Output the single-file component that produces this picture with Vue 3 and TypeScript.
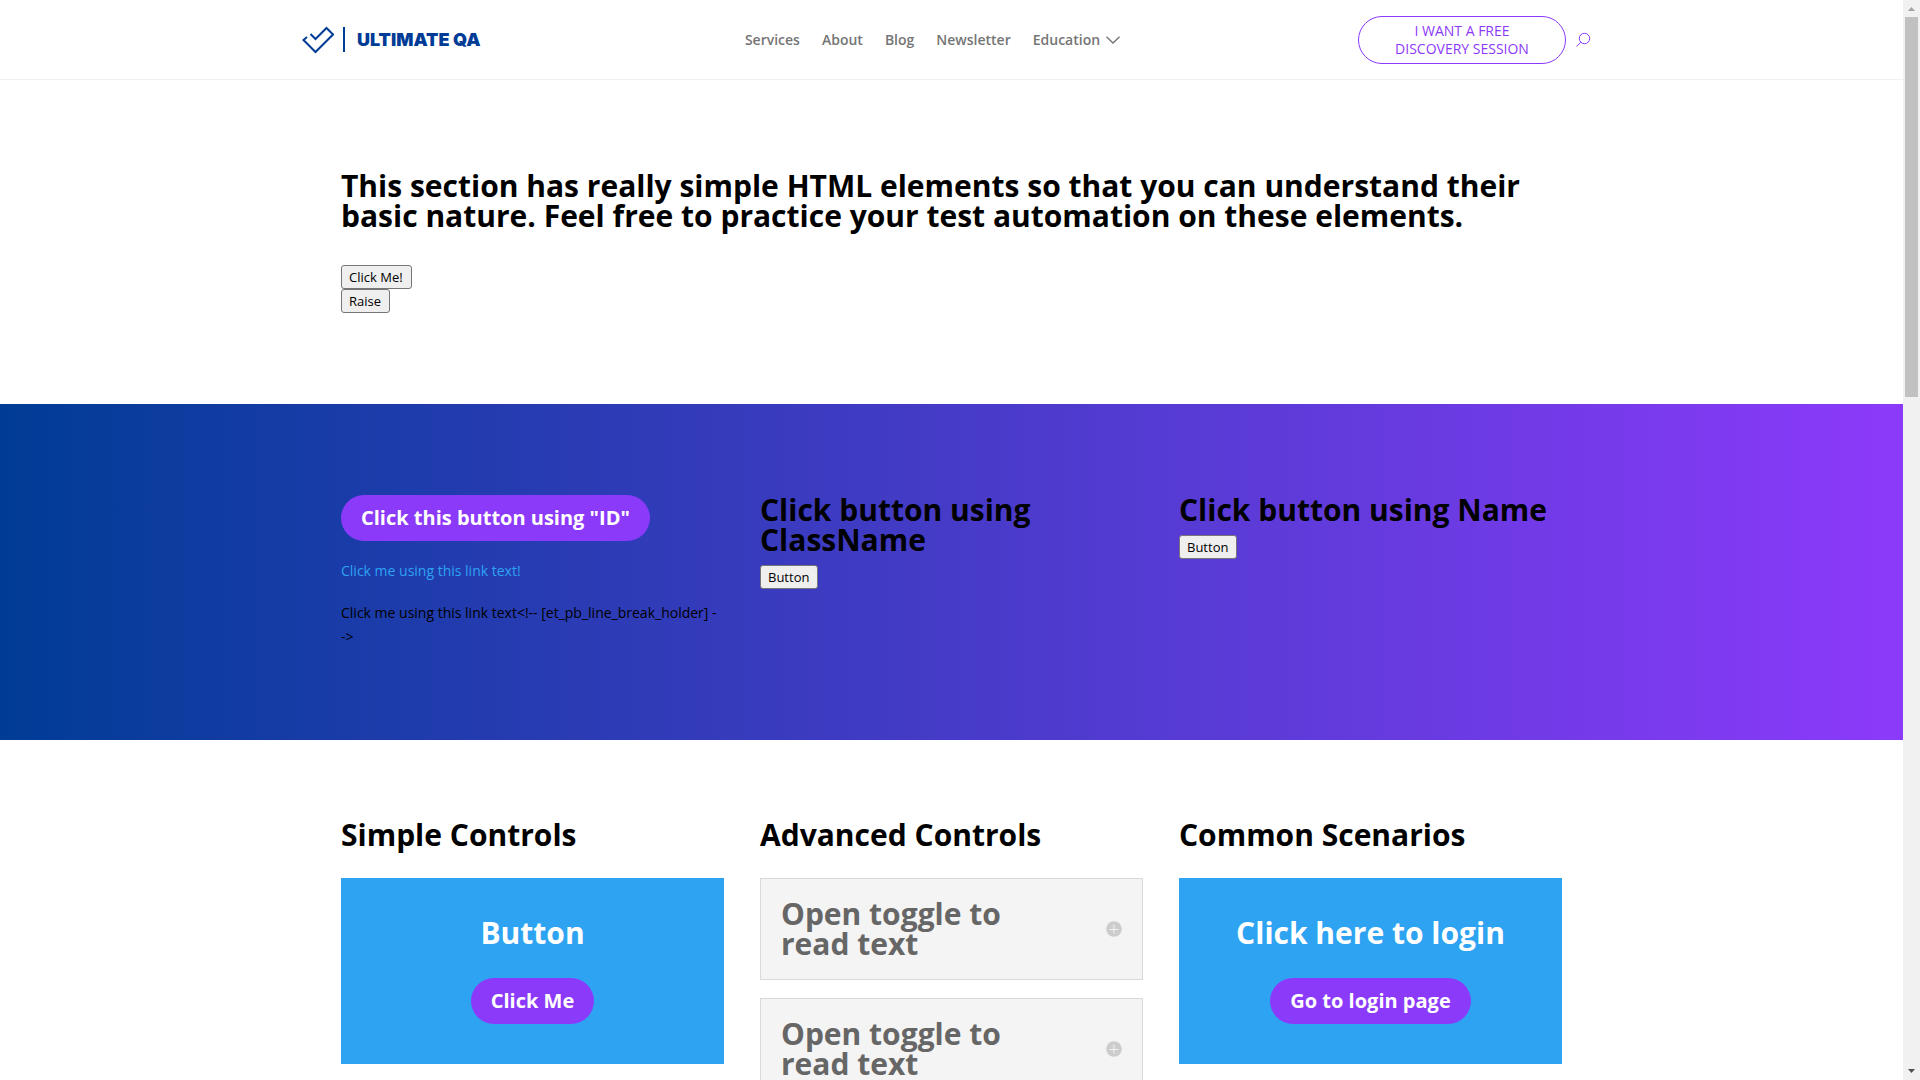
<script setup lang="ts">
interface NavItem {
  label: string
  menu?: boolean
}

const navItems: NavItem[] = [
  { label: 'Services' },
  { label: 'About' },
  { label: 'Blog' },
  { label: 'Newsletter' },
  { label: 'Education', menu: true },
]

const toggles: string[] = ['Open toggle to read text', 'Open toggle to read text']
const linkNote = 'Click me using this link text<!-- [et_pb_line_break_holder] -\n->'
</script>

<template>
  <div class="window">
    <div class="page">
      <header class="header">
        <div class="header-row">
          <a href="#" class="logo">
            <svg class="logo-mark" width="32" height="28" viewBox="0 0 32 28" aria-hidden="true">
              <path d="M8.500 8L13.500 13L24.500 2L31 8.500L13.500 26L1.500 14L5 11" />
            </svg>
            <span class="logo-bar"></span>
            <span class="logo-text">ULTIMATE QA</span>
          </a>
          <nav class="nav">
            <a v-for="item in navItems" :key="item.label" href="#" class="nav-link">
              {{ item.label }}
              <svg v-if="item.menu" width="14" height="8" viewBox="0 0 14 8" aria-hidden="true">
                <path d="M0.500 0.700L7 7L13.500 0.700" />
              </svg>
            </a>
          </nav>
          <div class="actions">
            <a href="#" class="cta">I WANT A FREE DISCOVERY SESSION</a>
            <button class="search" type="button" aria-label="Search">
              <svg width="16" height="16" viewBox="0 0 16 16" aria-hidden="true">
                <circle cx="9.500" cy="6.500" r="5.200" />
                <path d="M5.800 10.200L1.500 14.500" />
              </svg>
            </button>
          </div>
        </div>
      </header>

      <main>
        <section class="section">
          <div class="container">
            <h2 class="title intro-title">
              This section has really simple HTML elements so that you can understand their basic
              nature. Feel free to practice your test automation on these elements.
            </h2>
            <div class="stack">
              <button class="native" type="button">Click Me!</button>
              <button class="native" type="button">Raise</button>
            </div>
          </div>
        </section>

        <section class="section gradient">
          <div class="container columns">
            <div>
              <a href="#" class="pill">Click this button using "ID"</a>
              <p class="text"><a href="#" class="text-link">Click me using this link text!</a></p>
              <p class="text">{{ linkNote }}</p>
            </div>
            <div>
              <h2 class="title">Click button using ClassName</h2>
              <button class="native below-title" type="button">Button</button>
            </div>
            <div>
              <h2 class="title">Click button using Name</h2>
              <button class="native below-title" type="button">Button</button>
            </div>
          </div>
        </section>

        <section class="section controls">
          <div class="container columns">
            <div>
              <h2 class="title group-title">Simple Controls</h2>
              <div class="card">
                <h2 class="title">Button</h2>
                <a href="#" class="pill">Click Me</a>
              </div>
            </div>
            <div>
              <h2 class="title group-title">Advanced Controls</h2>
              <button v-for="(label, i) in toggles" :key="i" class="toggle" type="button">
                <span class="toggle-label">{{ label }}</span>
                <svg width="16" height="16" viewBox="0 0 16 16" aria-hidden="true">
                  <circle cx="8" cy="8" r="7.800" fill="#ccc" />
                  <path d="M3.500 8.500H12.500M8 3.500V12.500" stroke="#f4f4f4" stroke-width="1" />
                </svg>
              </button>
            </div>
            <div>
              <h2 class="title group-title">Common Scenarios</h2>
              <div class="card">
                <h2 class="title">Click here to login</h2>
                <a href="#" class="pill">Go to login page</a>
              </div>
            </div>
          </div>
        </section>
      </main>
    </div>

    <div class="scrollbar" aria-hidden="true">
      <svg width="17" height="17" viewBox="0 0 17 17"><path d="M5 11L8.500 7L12 11Z" fill="#a3a3a3" /></svg>
      <div class="thumb"></div>
      <div class="track"></div>
      <svg width="17" height="17" viewBox="0 0 17 17"><path d="M5 6L8.500 10L12 6Z" fill="#505050" /></svg>
    </div>
  </div>
</template>

<style>
body {
  margin: 0;
}
</style>

<style scoped>
.window {
  display: flex;
  height: 100vh;
  overflow: hidden;
  background: #fff;
  color: #000;
  font: 400 14px/24px "Open Sans", "Noto Sans", sans-serif;
}

.window * {
  box-sizing: border-box;
}

.window a {
  text-decoration: none;
}

.page {
  flex: 1;
  min-width: 0;
  overflow-y: auto;
  scrollbar-width: none;
}

.header {
  border-bottom: 1px solid #f0f0f0;
}

.header-row {
  display: flex;
  align-items: center;
  justify-content: space-between;
  width: 90%;
  max-width: 1299px;
  height: 79px;
  margin: 0 auto;
}

.logo {
  display: flex;
  align-items: center;
  flex: 1;
  color: #003c96;
}

.logo-mark path {
  fill: none;
  stroke: #003c96;
  stroke-width: 2;
}

.logo-bar {
  width: 2px;
  height: 25px;
  margin: 0 12px 0 9px;
  background: #003c96;
}

.logo-text {
  font: 900 18px/24px Inter, "Open Sans", sans-serif;
  white-space: nowrap;
}

.nav {
  display: flex;
  gap: 22px;
  padding-right: 28px;
}

.nav-link {
  display: flex;
  align-items: center;
  gap: 6px;
  color: #757575;
  font-weight: 600;
}

.nav-link path {
  fill: none;
  stroke: #757575;
  stroke-width: 1.4;
}

.actions {
  display: flex;
  align-items: center;
  justify-content: flex-end;
  flex: 1;
  gap: 9px;
  padding-right: 10px;
}

.cta {
  width: 208px;
  padding: 5px 32px;
  border: 1px solid #8c3afa;
  border-radius: 24px;
  color: #8c3afa;
  font-weight: 500;
  line-height: 18px;
  text-align: center;
}

.search {
  display: flex;
  padding: 0;
  border: 0;
  background: none;
}

.search svg {
  fill: none;
  stroke: #8c3afa;
}

.section {
  padding: 91px 0;
}

.container {
  width: 80%;
  max-width: 1221px;
  margin: 0 auto;
}

.columns {
  display: grid;
  grid-template-columns: repeat(3, 1fr);
  gap: 36px;
}

.title {
  margin: 0;
  font-size: 30px;
  font-weight: 700;
  line-height: 30px;
}

.intro-title {
  margin-bottom: 34px;
}

.stack {
  display: flex;
  flex-direction: column;
  align-items: flex-start;
}

.native {
  display: block;
  height: 24px;
  padding: 0 8px 0 7px;
  border: 1px solid #767676;
  border-radius: 3px;
  background: #efefef;
  color: #000;
  font: 400 13px/22px "Open Sans", "Noto Sans", sans-serif;
}

.below-title {
  margin-top: 10px;
}

.gradient {
  background: linear-gradient(90deg, #003c96, #8c3afa);
}

.pill {
  display: block;
  width: fit-content;
  padding: 6px 20px;
  border-radius: 23px;
  background: #8c3afa;
  color: #fff;
  font-size: 20px;
  font-weight: 700;
  line-height: 34px;
}

.text {
  margin: 18px 0 0;
  white-space: pre-line;
}

.text-link {
  color: #2ea3f2;
}

.controls {
  padding-top: 80px;
}

.group-title {
  margin-bottom: 28px;
}

.card {
  display: flex;
  flex-direction: column;
  align-items: center;
  gap: 30px;
  padding: 40px;
  background: #2ea3f2;
  color: #fff;
}

.toggle {
  display: flex;
  align-items: center;
  justify-content: space-between;
  width: 100%;
  margin-bottom: 18px;
  padding: 20px;
  border: 1px solid #d9d9d9;
  background: #f4f4f4;
  color: #666;
  font: 700 30px/30px "Open Sans", "Noto Sans", sans-serif;
  text-align: left;
}

.toggle-label {
  max-width: 280px;
}

.scrollbar {
  display: flex;
  flex-direction: column;
  width: 17px;
  background: #f1f1f1;
}

.thumb {
  flex: 4;
  margin: 0 2px;
  background: #c1c1c1;
}

.track {
  flex: 7;
}
</style>
